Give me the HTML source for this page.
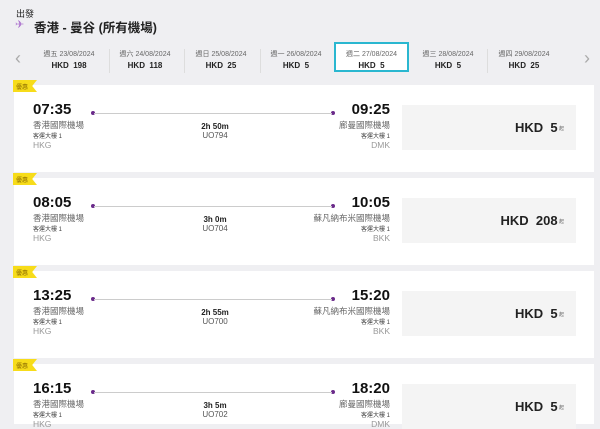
<!DOCTYPE html><html><head><meta charset="utf-8"><style>
*{margin:0;padding:0;box-sizing:border-box}
body{width:600px;height:419px;overflow:hidden;background:#efeff2;font-family:"Liberation Sans","Noto Sans CJK TC",sans-serif;color:#222;position:relative}
.a{position:absolute}
.d{position:absolute;top:46px;width:74px;height:30px;text-align:center}
.d .t{font-size:7px;color:#666;margin-top:3px}
.d .p{font-size:8px;font-weight:bold;margin-top:2px}
.sep{position:absolute;top:49px;width:1px;height:24px;background:#ddd}
.card{position:absolute;left:14px;width:580px;height:87px;background:#fff}
.badge{position:absolute;left:13px;width:24px;height:12px;background:#f7dc1a;clip-path:polygon(0 0,100% 0,80% 50%,100% 100%,0 100%);font-size:6px;color:#8a6a00;padding:2px 0 0 3px}
.tm{font-size:15px;font-weight:bold;color:#111}
.ap{font-size:8.5px;color:#666}
.te{font-size:6px;color:#444}
.cd{font-size:8.5px;color:#999}
.line{position:absolute;height:1px;background:#ccc}
.dot{position:absolute;width:4px;height:4px;border-radius:50%;background:#6a2a8a}
.pb{position:absolute;left:388px;width:174px;height:45px;background:#f4f4f4;font-weight:bold;font-size:13px;text-align:right;padding:15px 12px 0 0}
.pb small{font-size:5px;color:#666;font-weight:normal;vertical-align:middle}
</style></head><body>
<div class="a" style="left:16px;top:7px;font-size:9px">出發</div>
<div class="a" style="left:15px;top:18px;font-size:11px;color:#b07ad0">✈</div>
<div class="a" style="left:34px;top:17px;font-size:12.5px;font-weight:bold">香港 - 曼谷 (所有機場)</div>
<div class="a" style="left:15px;top:48px;font-size:18px;color:#aaa">‹</div>
<div class="a" style="left:584px;top:48px;font-size:18px;color:#aaa">›</div>
<div class="d" style="left:32px"><div class="t">週五 23/08/2024</div><div class="p">HKD&nbsp; 198</div></div>
<div class="sep" style="left:109px"></div>
<div class="d" style="left:108px"><div class="t">週六 24/08/2024</div><div class="p">HKD&nbsp; 118</div></div>
<div class="sep" style="left:184px"></div>
<div class="d" style="left:184px"><div class="t">週日 25/08/2024</div><div class="p">HKD&nbsp; 25</div></div>
<div class="sep" style="left:260px"></div>
<div class="d" style="left:259px"><div class="t">週一 26/08/2024</div><div class="p">HKD&nbsp; 5</div></div>
<div class="d" style="left:334px;border:2px solid #2ab7d0;background:#fff;width:75px;height:30px;top:42px"><div class="t" style="margin-top:5px">週二 27/08/2024</div><div class="p">HKD&nbsp; 5</div></div>
<div class="d" style="left:411px"><div class="t">週三 28/08/2024</div><div class="p">HKD&nbsp; 5</div></div>
<div class="sep" style="left:487px"></div>
<div class="d" style="left:487px"><div class="t">週四 29/08/2024</div><div class="p">HKD&nbsp; 25</div></div>

<div class="card" style="top:85px"></div>
<div class="card" style="top:178px"></div>
<div class="card" style="top:271px"></div>
<div class="card" style="top:364px;height:60px"></div>

<div id="c"></div>
<script>
var data=[[80,"07:35","09:25","廊曼國際機場","DMK","2h 50m","UO794","5"],
[173,"08:05","10:05","蘇凡納布米國際機場","BKK","3h 0m","UO704","208"],
[266,"13:25","15:20","蘇凡納布米國際機場","BKK","2h 55m","UO700","5"],
[359,"16:15","18:20","廊曼國際機場","DMK","3h 5m","UO702","5"]];
var h="";
data.forEach(function(r){var y=r[0];
h+='<div class="badge" style="top:'+y+'px">優惠</div>';
h+='<div class="a tm" style="left:33px;top:'+(y+21)+'px">'+r[1]+'</div>';
h+='<div class="a ap" style="left:33px;top:'+(y+39)+'px">香港國際機場</div>';
h+='<div class="a te" style="left:33px;top:'+(y+51)+'px">客運大樓 1</div>';
h+='<div class="a cd" style="left:33px;top:'+(y+60)+'px">HKG</div>';
h+='<div class="dot" style="left:91px;top:'+(y+31)+'px"></div><div class="dot" style="left:331px;top:'+(y+31)+'px"></div>';
h+='<div class="line" style="left:94px;width:238px;top:'+(y+33)+'px"></div>';
h+='<div class="a" style="left:190px;width:50px;text-align:center;font-size:8px;font-weight:bold;top:'+(y+42)+'px">'+r[5]+'</div>';
h+='<div class="a" style="left:190px;width:50px;text-align:center;font-size:8px;color:#555;top:'+(y+51)+'px">'+r[6]+'</div>';
h+='<div class="a tm" style="right:210px;top:'+(y+21)+'px">'+r[2]+'</div>';
h+='<div class="a ap" style="right:210px;top:'+(y+39)+'px">'+r[3]+'</div>';
h+='<div class="a te" style="right:210px;top:'+(y+51)+'px">客運大樓 1</div>';
h+='<div class="a cd" style="right:210px;top:'+(y+60)+'px">'+r[4]+'</div>';
h+='<div class="pb" style="left:402px;top:'+(y+25)+'px">HKD&nbsp; '+r[7]+'<small> 起</small></div>';
});
document.getElementById("c").innerHTML=h;
</script>
</body></html>
